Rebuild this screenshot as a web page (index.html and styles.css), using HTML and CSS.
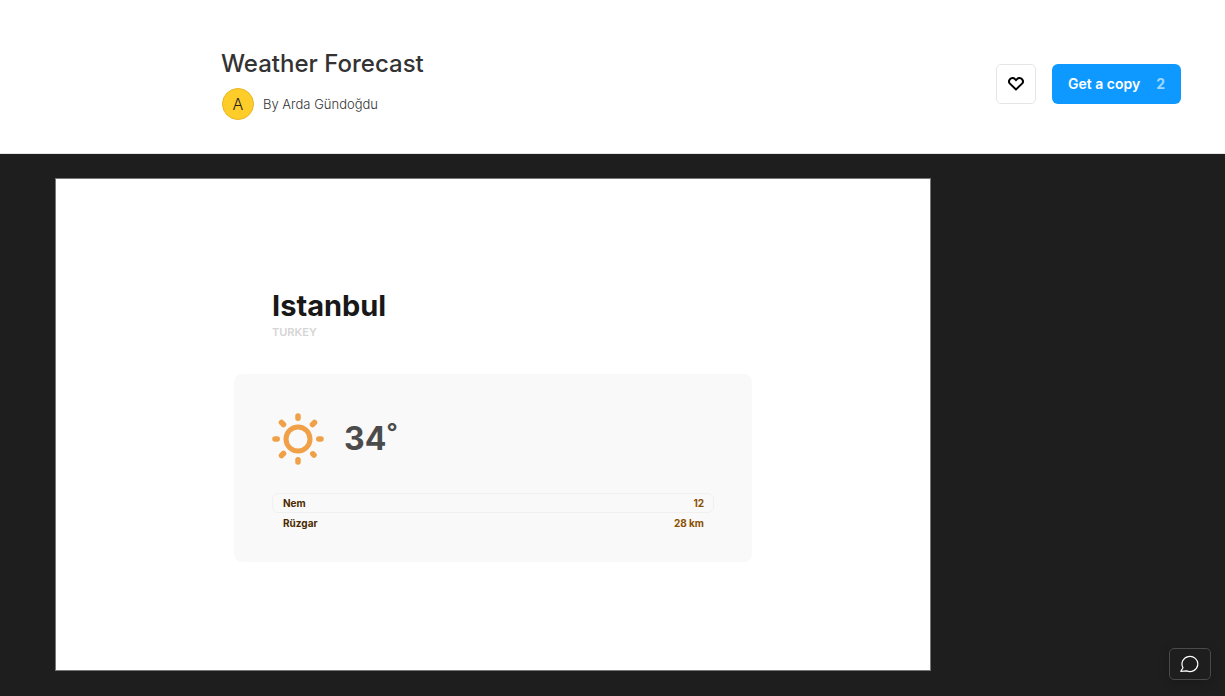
FILE: index.html
```html
<!DOCTYPE html>
<html lang="en">
<head>
<meta charset="utf-8">
<meta name="viewport" content="width=device-width, initial-scale=1">
<title>Weather Forecast</title>
<link rel="stylesheet" href="styles.css">
</head>
<body>
<header class="header">
  <div class="intro">
    <h1 class="title">Weather Forecast</h1>
    <div class="author">
      <span class="avatar" aria-hidden="true">A</span>
      <a class="author-link" href="#author">By Arda Gündoğdu</a>
    </div>
  </div>
  <div class="actions">
    <button class="like" type="button" aria-label="Like">
      <svg width="16" height="14" viewBox="0 0 16 14" fill="none" stroke="#000" stroke-width="2"><path d="M8 12.4 2.2 6.9C.9 5.600.7 3.700 1.900 2.300 3.300.8 5.600.7 7 2.100L8 3.100 9 2.100C10.400.7 12.700.8 14.100 2.300 15.300 3.700 15.100 5.600 13.800 6.900Z"/></svg>
    </button>
    <button class="copy" type="button"><span>Get a copy</span><span class="count">2</span></button>
  </div>
</header>
<main class="stage">
  <section class="artboard">
    <div class="place">
      <h2 class="city">Istanbul</h2>
      <p class="country">TURKEY</p>
    </div>
    <div class="card">
      <div class="now">
        <svg class="sun" width="52" height="52" viewBox="0 0 52 52" fill="none" stroke="#f0a047" stroke-width="5" stroke-linecap="round" aria-hidden="true">
          <circle cx="26" cy="26" r="12"/>
          <path stroke-width="5.500" d="M26 3v2.200M26 46.800v2.200M3 26h2.200M46.800 26h2.200M9.500 9.500l2 2M40.500 11.500l2-2M9.500 42.500l2-2M40.800 40.800l1.200 1.200"/>
        </svg>
        <p class="temp">34˚</p>
      </div>
      <dl class="details">
        <div class="row row-active"><dt>Nem</dt><dd>12</dd></div>
        <div class="row"><dt>Rüzgar</dt><dd>28 km</dd></div>
      </dl>
    </div>
  </section>
</main>
<button class="chat" type="button" aria-label="Comments">
  <svg width="20" height="18" viewBox="0 0 20 18" fill="none" stroke="#fff" stroke-width="1.200" stroke-linejoin="round"><path d="M.8 16.300 3 12.700A7.900 7.600 0 1 1 6.600 15.900Z"/></svg>
</button>
</body>
</html>
```
FILE: styles.css
```css
* { box-sizing: border-box; }
body {
  margin: 0;
  min-height: 100vh;
  display: flex;
  flex-direction: column;
  background: #1e1e1e;
  font-family: Inter, "Liberation Sans", sans-serif;
}
h1, h2, p, dl, dd { margin: 0; }
button { font-family: inherit; padding: 0; cursor: pointer; }
svg { display: block; }

.header {
  display: flex;
  justify-content: space-between;
  align-items: flex-start;
  padding: 48px 44px 33px 221px;
  background: #fff;
  border-bottom: 1px solid #e5e5e5;
}
.title { font-size: 24px; line-height: 32px; font-weight: 550; color: #333; }
.author { display: flex; align-items: center; gap: 9px; margin-top: 8px; padding-left: 1px; }
.avatar {
  width: 32px;
  height: 32px;
  border: 1px solid #e5b827;
  border-radius: 50%;
  background: #ffcd29;
  color: #222;
  font-size: 16px;
  font-weight: 300;
  line-height: 30px;
  text-align: center;
}
.author-link { font-size: 13px; line-height: 20px; font-weight: 300; color: #333; text-decoration: none; }
.actions { display: flex; gap: 16px; margin-top: 16px; }
.like {
  display: grid;
  place-items: center;
  width: 40px;
  height: 40px;
  background: #fff;
  border: 1px solid #e5e5e5;
  border-radius: 5px;
}
.copy {
  display: flex;
  align-items: center;
  gap: 16px;
  height: 40px;
  padding: 0 16px 2px;
  border: 0;
  border-radius: 6px;
  background: #0d99ff;
  color: #fff;
  font-size: 14px;
  font-weight: 600;
}
.count { color: #9ed6ff; font-weight: 700; }

.stage { flex: 1; padding: 25px 295px 25px 56px; }
.artboard {
  padding: 108px 178px;
  background: #fff;
  outline: 1px solid #777;
}
.place { padding-left: 38px; }
.city { font-size: 29px; line-height: 38px; font-weight: 700; color: #181818; }
.country { font-size: 11px; line-height: 14px; font-weight: 600; color: #d5d5d5; }
.card {
  margin-top: 35px;
  padding: 39px 38px 29px;
  border-radius: 8px;
  background: #f9f9f9;
}
.now { display: flex; align-items: center; gap: 20px; }
.temp { font-size: 32px; line-height: 40px; font-weight: 700; color: #4b4b4b; }
.details { margin-top: 28px; font-size: 10px; line-height: 18px; font-weight: 700; }
.row {
  display: flex;
  justify-content: space-between;
  padding: 0 9px 0 10px;
  border: 1px solid transparent;
  border-radius: 6px;
  color: #4b2a00;
}
.row-active { border-color: #f0f0f0; }
.row dd { color: #8b5000; }

.chat {
  position: fixed;
  right: 14px;
  bottom: 16px;
  display: grid;
  place-items: center;
  width: 42px;
  height: 32px;
  background: #1e1e1e;
  border: 1px solid #4a4a4a;
  border-radius: 5px;
  box-shadow: 0 2px 12px rgba(0, 0, 0, 0.2);
}
```
